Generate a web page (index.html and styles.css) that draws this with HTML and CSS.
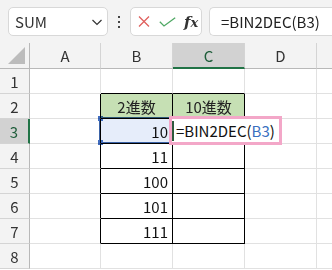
FILE: index.html
```html
<!DOCTYPE html>
<html>
<head>
<meta charset="utf-8">
<link rel="stylesheet" href="styles.css">
</head>
<body>
<div class="toolbar">
  <div class="namebox">
    <span>SUM</span>
    <svg class="chev" width="12" height="8" viewBox="0 0 12 8"><path d="M1.5 2 L6 6.5 L10.5 2" fill="none" stroke="#333" stroke-width="1.2"/></svg>
  </div>
  <div class="dots"><i></i><i></i><i></i></div>
  <div class="fbtns">
    <svg width="12" height="11" viewBox="0 0 12 11"><path d="M1 0.5 L11 10.5 M11 0.5 L1 10.5" stroke="#e0605e" stroke-width="1.3" fill="none"/></svg>
    <svg width="17" height="10" viewBox="0 0 17 10"><path d="M0.8 4.8 L5 9 L16.2 0.8" stroke="#4fa864" stroke-width="1.3" fill="none"/></svg>
    <span class="fx">f<span class="x">x</span></span>
  </div>
  <div class="finput">=BIN2DEC(B3)</div>
</div>
<div class="sheet">
  <div class="corner"><svg width="17" height="17" viewBox="0 0 17 17"><path d="M0 17 L17 0 L17 17 Z" fill="#bcbcbc"/></svg></div>
  <div class="ch">A</div><div class="ch">B</div><div class="ch sel">C</div><div class="ch">D</div><div class="ch last"></div>

  <div class="rh">1</div><div class="c"></div><div class="c tb"></div><div class="c tb"></div><div class="c"></div><div class="c last"></div>
  <div class="rh">2</div><div class="c tl"></div><div class="c t hd">2進数</div><div class="c t hd">10進数</div><div class="c"></div><div class="c last"></div>
  <div class="rh sel">3</div><div class="c tl"></div><div class="c t num">10</div><div class="c t"></div><div class="c"></div><div class="c last"></div>
  <div class="rh">4</div><div class="c tl"></div><div class="c t num">11</div><div class="c t"></div><div class="c"></div><div class="c last"></div>
  <div class="rh">5</div><div class="c tl"></div><div class="c t num">100</div><div class="c t"></div><div class="c"></div><div class="c last"></div>
  <div class="rh">6</div><div class="c tl"></div><div class="c t num">101</div><div class="c t"></div><div class="c"></div><div class="c last"></div>
  <div class="rh">7</div><div class="c tl"></div><div class="c t num">111</div><div class="c t"></div><div class="c"></div><div class="c last"></div>
  <div class="rh">8</div><div class="c"></div><div class="c"></div><div class="c"></div><div class="c"></div><div class="c last"></div>

  <div class="refbox"><i class="h h1"></i><i class="h h2"></i></div>
  <div class="editbox"><i class="caret"></i><span>=BIN2DEC(<span class="ref">B3</span>)</span></div>
</div>
</body>
</html>
```
FILE: styles.css
```css
html, body {
  margin: 0;
  padding: 0;
}
body {
  width: 332px;
  height: 270px;
  overflow: hidden;
  background: #fff;
  font-family: "Noto Sans CJK JP", "Noto Sans", sans-serif;
  color: #111;
}
.toolbar {
  height: 43px;
  box-sizing: border-box;
  background: #f3f3f3;
  display: flex;
  padding: 7px 0 7px 8px;
}
.namebox {
  width: 100px;
  box-sizing: border-box;
  background: #fff;
  border: 1px solid #d8d8d8;
  border-radius: 5px;
  display: flex;
  align-items: center;
  justify-content: space-between;
  padding: 0 4px 0 6px;
  font-size: 15px;
  color: #333;
}
.chev { display: block; }
.dots {
  width: 22px;
  display: flex;
  flex-direction: column;
  align-items: center;
  justify-content: center;
  gap: 3px;
}
.dots i {
  display: block;
  width: 2px;
  height: 2px;
  background: #444;
}
.fbtns {
  width: 72px;
  box-sizing: border-box;
  background: #fff;
  border: 1px solid #d8d8d8;
  border-radius: 5px;
  display: flex;
  align-items: center;
  padding: 0 0 0 7px;
  gap: 9px;
}
.fbtns svg { display: block; }
.fx {
  font-family: "DejaVu Serif", serif;
  font-style: italic;
  font-weight: bold;
  font-size: 15px;
  color: #333;
  margin-left: -1px;
}
.fx .x { font-size: 13px; }
.finput {
  margin-left: 7px;
  flex: 1;
  background: #fff;
  border: 1px solid #d8d8d8;
  border-right: none;
  border-radius: 5px 0 0 5px;
  display: flex;
  align-items: center;
  padding-left: 11px;
  font-size: 15px;
  color: #222;
}
.sheet {
  position: relative;
  display: grid;
  grid-template-columns: 30px 71px 72px 72px 72px 1fr;
  grid-template-rows: 26px;
  grid-auto-rows: 25px;
  font-size: 15px;
}
.sheet > div {
  box-sizing: border-box;
}
.corner {
  background: #f3f3f3;
  border-right: 1px solid #b8b8b8;
  border-bottom: 1px solid #b8b8b8;
  display: flex;
  align-items: flex-end;
  justify-content: flex-end;
  padding: 0 4px 4px 0;
}
.corner svg { display: block; }
.ch {
  background: #f3f3f3;
  border-right: 1px solid #d4d4d4;
  border-bottom: 1px solid #b8b8b8;
  display: flex;
  align-items: center;
  justify-content: center;
  color: #333;
}
.ch.last { border-right: none; }
.ch.sel {
  background: #d2d2d2;
  color: #1f5e3b;
  border-bottom: 2px solid #217346;
}
.rh {
  background: #f3f3f3;
  border-right: 1px solid #b8b8b8;
  border-bottom: 1px solid #d4d4d4;
  display: flex;
  align-items: center;
  justify-content: center;
  color: #333;
}
.rh.sel {
  background: #d2d2d2;
  color: #1f5e3b;
  border-right: 2px solid #217346;
}
.c {
  border-right: 1px solid #e1e1e1;
  border-bottom: 1px solid #e1e1e1;
  display: flex;
  align-items: center;
  padding: 0 4px;
  white-space: nowrap;
}
.c.last { border-right: none; }
.c.tb { border-bottom-color: #000; }
.c.tl { border-right-color: #000; }
.c.t {
  border-right-color: #000;
  border-bottom-color: #000;
}
.c.hd {
  background: #c6e0b4;
  justify-content: center;
  color: #222;
}
.c.num {
  justify-content: flex-end;
}
.refbox {
  position: absolute;
  left: 99px;
  top: 74px;
  width: 75px;
  height: 27px;
  box-sizing: border-box;
  border: 2px solid #3b63a7;
  background: rgba(205, 220, 245, 0.5);
  mix-blend-mode: multiply;
}
.h {
  position: absolute;
  width: 5px;
  height: 5px;
  background: #3f6cc0;
  left: -3px;
}
.h1 { top: -3px; }
.h2 { bottom: -3px; }
.editbox {
  position: absolute;
  left: 169px;
  top: 73px;
  width: 113px;
  height: 29px;
  box-sizing: border-box;
  border: 3px solid #f3a7c8;
  background: #fff;
  display: flex;
  align-items: center;
  padding-left: 4px;
  color: #111;
}
.caret {
  position: absolute;
  left: 0;
  top: 2px;
  width: 2px;
  height: 20px;
  background: #2d5a3d;
}
.ref { color: #3a6fbf; }
```
